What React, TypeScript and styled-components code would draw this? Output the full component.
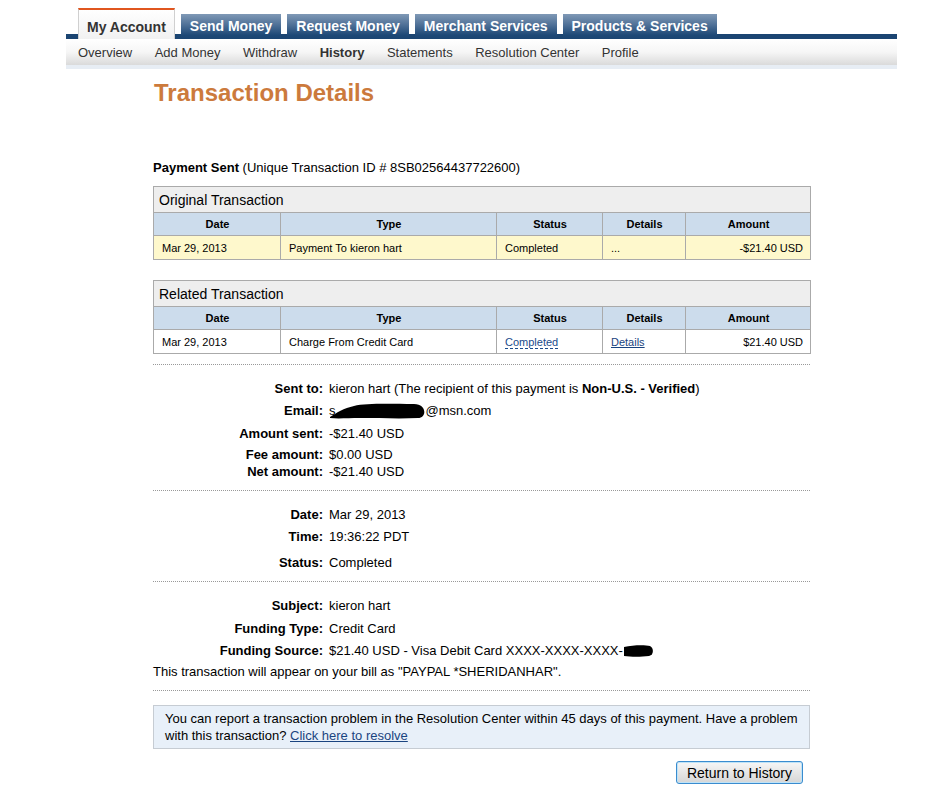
import React from 'react';
import styled, { createGlobalStyle, css } from 'styled-components';

const GlobalStyle = createGlobalStyle`
  body {
    margin: 0;
    background: #fff;
    color: #000;
    font-family: "Liberation Sans", Arial, sans-serif;
  }
`;

const Page = styled.div`
  width: 831px;
  margin-left: 66px;
`;

const TabBar = styled.div`
  display: flex;
  align-items: flex-end;
  gap: 6px;
  height: 39px;
  padding-left: 12px;
  background: linear-gradient(to bottom, transparent 34px, #1b4572 34px);
`;

const Tab = styled.div<{ $active?: boolean }>`
  box-sizing: border-box;
  font-size: 14px;
  font-weight: bold;
  white-space: nowrap;
  ${(p) =>
    p.$active
      ? css`
          height: 31px;
          padding: 8px 8px 0;
          line-height: 18px;
          color: #333;
          border-top: 2px solid #e0561f;
          border-left: 1px solid #d0d0d0;
          border-right: 1px solid #d0d0d0;
          background: linear-gradient(#ffffff, #f1f1f1);
        `
      : css`
          height: 25px;
          padding: 0 9px;
          line-height: 25px;
          color: #fff;
          background: linear-gradient(#8099b6, #4d6f96 45%, #1d4876 85%, #1b4572);
        `}
`;

const SubNav = styled.nav`
  display: flex;
  align-items: center;
  gap: 22.5px;
  height: 26px;
  padding-left: 12px;
  font-size: 13px;
  background: linear-gradient(#ffffff, #f6f6f6 50%, #dadada);
  border-bottom: 4px solid #e7edf4;
`;

const NavItem = styled.span<{ $current?: boolean }>`
  color: #333;
  font-weight: ${(p) => (p.$current ? 'bold' : 'normal')};
`;

const Content = styled.main`
  width: 657px;
  padding-left: 87px;
  padding-bottom: 8px;
`;

const Title = styled.h1`
  margin: 10px 0 0 1px;
  font-size: 24px;
  line-height: 28px;
  font-weight: bold;
  color: #cc7a3c;
`;

const Summary = styled.p`
  margin: 53px 0 0;
  font-size: 13px;
  line-height: 16px;
`;

const Table = styled.table<{ $first?: boolean }>`
  width: 657px;
  margin-top: ${(p) => (p.$first ? 10 : 20)}px;
  border-collapse: collapse;
  table-layout: fixed;
  font-size: 11px;

  td,
  th {
    border: 1px solid #aaaaaa;
    padding: 0 7px 0 8px;
    box-sizing: border-box;
  }
`;

const CaptionCell = styled.th`
  && {
    height: 26px;
    padding: 0 5px;
  }
  background: #eeeeee;
  font-size: 14px;
  font-weight: normal;
  text-align: left;
`;

const HeadCell = styled.th`
  height: 23px;
  background: #ccdcec;
  font-weight: bold;
  text-align: center;
`;

const DataRow = styled.tr<{ $highlight?: boolean }>`
  background: ${(p) => (p.$highlight ? '#fef8cc' : '#fff')};
`;

const Cell = styled.td<{ $right?: boolean }>`
  height: 24px;
  text-align: ${(p) => (p.$right ? 'right' : 'left')};
`;

const DashedLink = styled.a`
  color: #1a4c8c;
  text-decoration: none;
  border-bottom: 1px dashed #1a4c8c;
`;

const Link = styled.a`
  color: #1a4480;
  text-decoration: underline;
`;

const Section = styled.section<{ $top: number }>`
  padding: ${(p) => p.$top}px 0 10px;
  border-top: 1px dotted #999;
  font-size: 13px;
`;

const FirstSection = styled(Section)`
  margin-top: 10px;
`;

const Row = styled.div<{ $gap?: number }>`
  display: flex;
  align-items: center;
  margin-top: ${(p) => p.$gap ?? 0}px;
  line-height: 16px;
`;

const Label = styled.span`
  width: 170px;
  flex: none;
  text-align: right;
  font-weight: bold;
`;

const Value = styled.span`
  margin-left: 6px;
  display: inline-flex;
  align-items: center;
`;

const Note = styled.div`
  margin-top: 5px;
  line-height: 16px;
`;

const Notice = styled.div`
  margin-top: 14px;
  padding: 4px 11px;
  border: 1px solid #c6ccd3;
  background: #e8f0f9;
  font-size: 13px;
  line-height: 17px;
`;

const Footer = styled.div`
  display: flex;
  justify-content: flex-end;
  padding-right: 7px;
  margin-top: 12px;
`;

const Button = styled.button`
  width: 127px;
  height: 23px;
  padding: 0;
  border: 1px solid #3a8ccf;
  border-radius: 3px;
  background: linear-gradient(#f6f6f6, #e6e6e6 50%, #d6d6d6);
  font-family: "Liberation Sans", Arial, sans-serif;
  font-size: 14px;
  color: #000;
  box-shadow: inset 0 0 0 1px #bfe3f7;
`;

const Blot = styled.svg`
  display: block;
`;

function EmailBlot() {
  return (
    <Blot width="96" height="16" viewBox="0 0 96 16" style={{ marginLeft: -6 }}>
      <path
        d="M0 14 C 6 10, 14 5, 24 3 C 36 0, 60 1, 84 1 C 97 1, 97 15, 88 15 C 70 16, 48 15, 30 15 C 18 15, 8 16, 0 15 Z"
        fill="#000"
      />
    </Blot>
  );
}

function CardBlot() {
  return (
    <Blot width="30" height="12" viewBox="0 0 30 12">
      <path d="M1 2 C 10 0, 22 0, 27 1 C 31 3, 31 10, 26 11 C 18 12, 8 12, 1 11 Z" fill="#000" />
    </Blot>
  );
}

const tabs = ['My Account', 'Send Money', 'Request Money', 'Merchant Services', 'Products & Services'];
const subNav = ['Overview', 'Add Money', 'Withdraw', 'History', 'Statements', 'Resolution Center', 'Profile'];
const widths = [127, 216, 106, 83, 125];

function Columns() {
  return (
    <colgroup>
      {widths.map((w, i) => (
        <col key={i} style={{ width: w }} />
      ))}
    </colgroup>
  );
}

function HeadRow() {
  return (
    <tr>
      <HeadCell>Date</HeadCell>
      <HeadCell>Type</HeadCell>
      <HeadCell>Status</HeadCell>
      <HeadCell>Details</HeadCell>
      <HeadCell>Amount</HeadCell>
    </tr>
  );
}

export default function App() {
  return (
    <Page>
      <GlobalStyle />
      <TabBar>
        {tabs.map((t, i) => (
          <Tab key={t} $active={i === 0}>
            {t}
          </Tab>
        ))}
      </TabBar>
      <SubNav>
        {subNav.map((s) => (
          <NavItem key={s} $current={s === 'History'}>
            {s}
          </NavItem>
        ))}
      </SubNav>

      <Content>
        <Title>Transaction Details</Title>
        <Summary>
          <b>Payment Sent</b> (Unique Transaction ID # 8SB02564437722600)
        </Summary>

        <Table $first>
          <Columns />
          <thead>
            <tr>
              <CaptionCell colSpan={5}>Original Transaction</CaptionCell>
            </tr>
            <HeadRow />
          </thead>
          <tbody>
            <DataRow $highlight>
              <Cell>Mar 29, 2013</Cell>
              <Cell>Payment To kieron hart</Cell>
              <Cell>Completed</Cell>
              <Cell>...</Cell>
              <Cell $right>-$21.40 USD</Cell>
            </DataRow>
          </tbody>
        </Table>

        <Table>
          <Columns />
          <thead>
            <tr>
              <CaptionCell colSpan={5}>Related Transaction</CaptionCell>
            </tr>
            <HeadRow />
          </thead>
          <tbody>
            <DataRow>
              <Cell>Mar 29, 2013</Cell>
              <Cell>Charge From Credit Card</Cell>
              <Cell>
                <DashedLink href="#">Completed</DashedLink>
              </Cell>
              <Cell>
                <Link href="#">Details</Link>
              </Cell>
              <Cell $right>$21.40 USD</Cell>
            </DataRow>
          </tbody>
        </Table>

        <FirstSection $top={16}>
          <Row>
            <Label>Sent to:</Label>
            <Value>
              kieron hart (The recipient of this payment is&nbsp;<b>Non-U.S. - Verified</b>)
            </Value>
          </Row>
          <Row $gap={6}>
            <Label>Email:</Label>
            <Value>
              s<EmailBlot />@msn.com
            </Value>
          </Row>
          <Row $gap={7}>
            <Label>Amount sent:</Label>
            <Value>-$21.40 USD</Value>
          </Row>
          <Row $gap={5}>
            <Label>Fee amount:</Label>
            <Value>$0.00 USD</Value>
          </Row>
          <Row $gap={1}>
            <Label>Net amount:</Label>
            <Value>-$21.40 USD</Value>
          </Row>
        </FirstSection>

        <Section $top={16}>
          <Row>
            <Label>Date:</Label>
            <Value>Mar 29, 2013</Value>
          </Row>
          <Row $gap={6}>
            <Label>Time:</Label>
            <Value>19:36:22 PDT</Value>
          </Row>
          <Row $gap={10}>
            <Label>Status:</Label>
            <Value>Completed</Value>
          </Row>
        </Section>

        <Section $top={16}>
          <Row>
            <Label>Subject:</Label>
            <Value>kieron hart</Value>
          </Row>
          <Row $gap={7}>
            <Label>Funding Type:</Label>
            <Value>Credit Card</Value>
          </Row>
          <Row $gap={6}>
            <Label>Funding Source:</Label>
            <Value>
              $21.40 USD - Visa Debit Card XXXX-XXXX-XXXX-
              <CardBlot />
            </Value>
          </Row>
          <Note>This transaction will appear on your bill as "PAYPAL *SHERIDANHAR".</Note>
        </Section>

        <Section $top={0}>
          <Notice>
            You can report a transaction problem in the Resolution Center within 45 days of this payment. Have a problem
            with this transaction? <Link href="#">Click here to resolve</Link>
          </Notice>
          <Footer>
            <Button>Return to History</Button>
          </Footer>
        </Section>
      </Content>
    </Page>
  );
}
